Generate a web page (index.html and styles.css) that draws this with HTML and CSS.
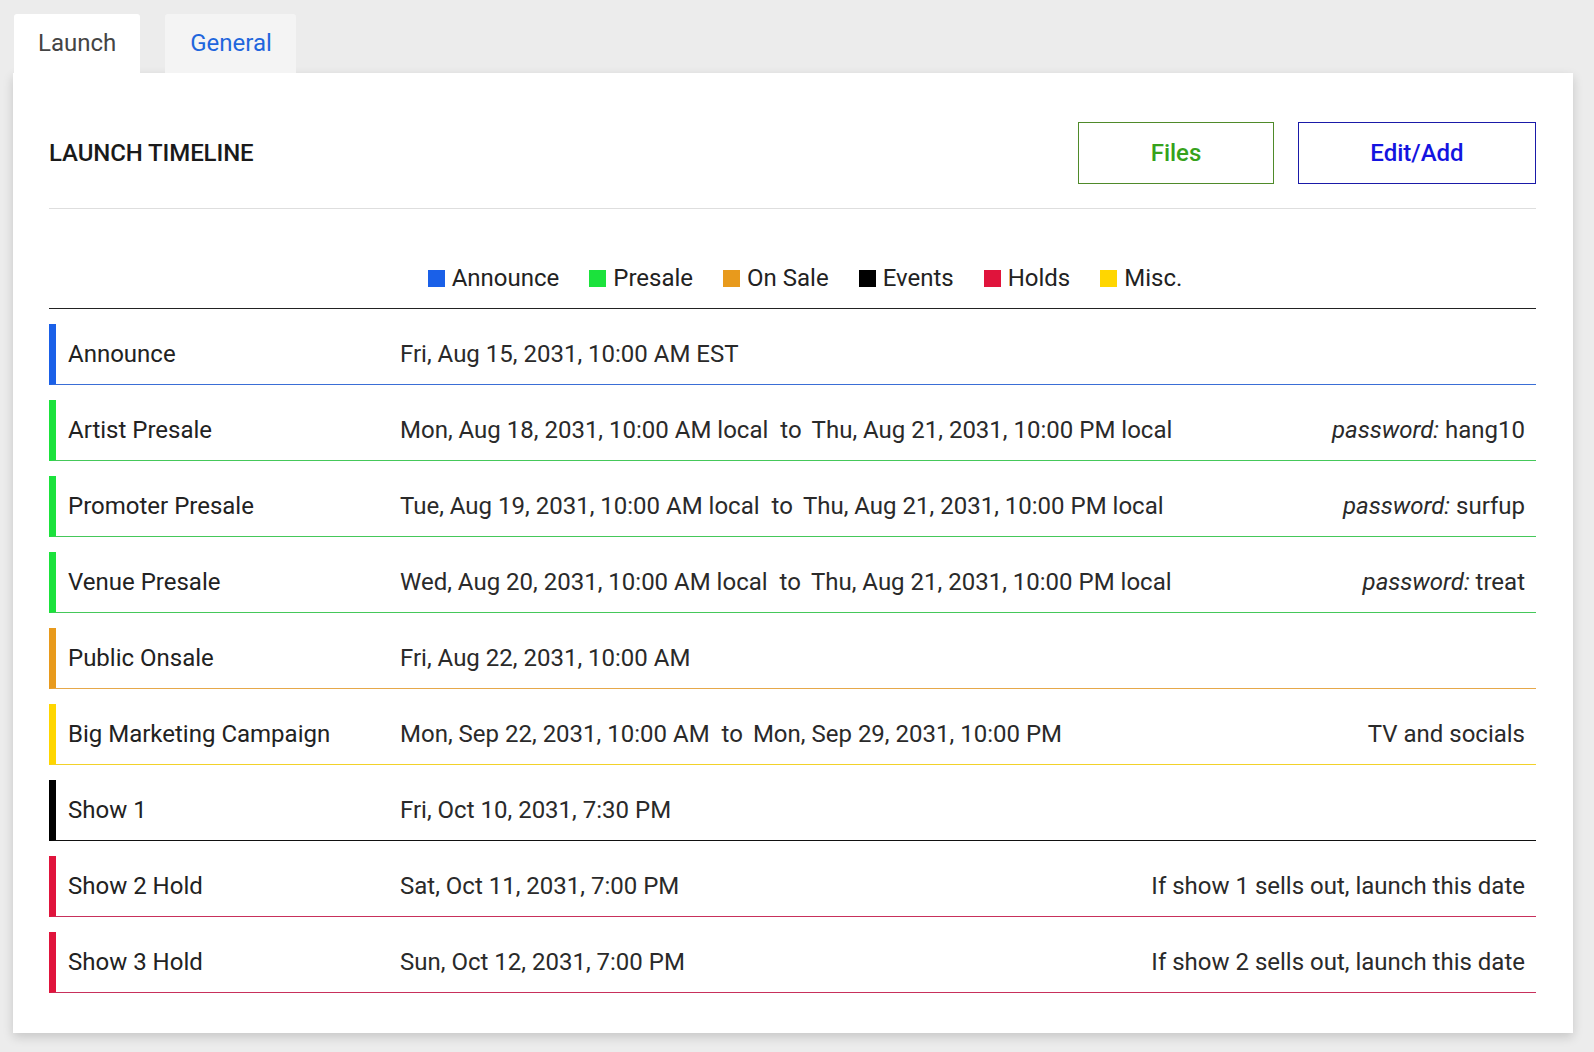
FILE: index.html
```html
<!DOCTYPE html>
<html lang="en">
<head>
<meta charset="utf-8">
<title>Launch Timeline</title>
<link rel="stylesheet" href="styles.css">
</head>
<body>
<div class="page">
  <div class="tabs">
    <div class="tab active">Launch</div>
    <div class="tab">General</div>
  </div>
  <div class="card">
    <div class="card-header">
      <h1 class="title">LAUNCH TIMELINE</h1>
      <div class="actions">
        <button class="btn btn-files">Files</button>
        <button class="btn btn-edit">Edit/Add</button>
      </div>
    </div>
    <div class="legend">
      <span class="legend-item"><i class="sw announce"></i>Announce</span>
      <span class="legend-item"><i class="sw presale"></i>Presale</span>
      <span class="legend-item"><i class="sw onsale"></i>On Sale</span>
      <span class="legend-item"><i class="sw events"></i>Events</span>
      <span class="legend-item"><i class="sw holds"></i>Holds</span>
      <span class="legend-item"><i class="sw misc"></i>Misc.</span>
    </div>
    <div class="rows">
      <div class="row announce">
        <span class="label">Announce</span>
        <span class="date">Fri, Aug 15, 2031, 10:00 AM EST</span>
        <span class="note"></span>
      </div>
      <div class="row presale">
        <span class="label">Artist Presale</span>
        <span class="date">Mon, Aug 18, 2031, 10:00 AM local<span class="to">to</span>Thu, Aug 21, 2031, 10:00 PM local</span>
        <span class="note"><em>password:</em> hang10</span>
      </div>
      <div class="row presale">
        <span class="label">Promoter Presale</span>
        <span class="date">Tue, Aug 19, 2031, 10:00 AM local<span class="to">to</span>Thu, Aug 21, 2031, 10:00 PM local</span>
        <span class="note"><em>password:</em> surfup</span>
      </div>
      <div class="row presale">
        <span class="label">Venue Presale</span>
        <span class="date">Wed, Aug 20, 2031, 10:00 AM local<span class="to">to</span>Thu, Aug 21, 2031, 10:00 PM local</span>
        <span class="note"><em>password:</em> treat</span>
      </div>
      <div class="row onsale">
        <span class="label">Public Onsale</span>
        <span class="date">Fri, Aug 22, 2031, 10:00 AM</span>
        <span class="note"></span>
      </div>
      <div class="row misc">
        <span class="label">Big Marketing Campaign</span>
        <span class="date">Mon, Sep 22, 2031, 10:00 AM<span class="to">to</span>Mon, Sep 29, 2031, 10:00 PM</span>
        <span class="note">TV and socials</span>
      </div>
      <div class="row events">
        <span class="label">Show 1</span>
        <span class="date">Fri, Oct 10, 2031, 7:30 PM</span>
        <span class="note"></span>
      </div>
      <div class="row holds">
        <span class="label">Show 2 Hold</span>
        <span class="date">Sat, Oct 11, 2031, 7:00 PM</span>
        <span class="note">If show 1 sells out, launch this date</span>
      </div>
      <div class="row holds">
        <span class="label">Show 3 Hold</span>
        <span class="date">Sun, Oct 12, 2031, 7:00 PM</span>
        <span class="note">If show 2 sells out, launch this date</span>
      </div>
    </div>
  </div>
</div>
</body>
</html>
```

FILE: styles.css
```css
* { box-sizing: border-box; }

html, body {
  margin: 0;
  padding: 0;
  background: #ececec;
  font-family: Roboto, "Liberation Sans", Arial, sans-serif;
  color: #222;
}

.page {
  padding: 14px 21px 20px 13px;
}

.tabs {
  display: flex;
  gap: 25px;
  padding-left: 1px;
}

.tab {
  height: 59px;
  padding: 0 24px 2px 25px;
  display: flex;
  align-items: center;
  font-size: 24px;
  color: #1f66dd;
  background: #f4f4f4;
  border-radius: 3px 3px 0 0;
}

.tab.active {
  color: #444;
  background: #fff;
  padding-left: 24px;
}

.card {
  width: 1560px;
  background: #fff;
  padding: 0 37px 40px 36px;
  box-shadow: 0 4px 10px rgba(0, 0, 0, 0.16);
}

.card-header {
  display: flex;
  align-items: center;
  justify-content: space-between;
  padding: 49px 0 24px;
  border-bottom: 1px solid #dedede;
}

.title {
  margin: 0;
  font-size: 24px;
  font-weight: 500;
  color: #1a1a1a;
  letter-spacing: -0.1px;
}

.actions {
  display: flex;
  gap: 24px;
}

.btn {
  height: 62px;
  background: #fff;
  font-family: inherit;
  font-size: 24px;
  font-weight: 500;
  cursor: pointer;
}

.btn-files {
  width: 196px;
  border: 1px solid #4f8a2a;
  color: #36a21c;
}

.btn-edit {
  width: 238px;
  border: 1px solid #1a1aa8;
  color: #1414e0;
}

.legend {
  display: flex;
  justify-content: center;
  align-items: center;
  gap: 30px;
  padding: 57px 0 18px 25px;
  border-bottom: 1px solid #222;
  font-size: 24px;
  line-height: 24px;
  color: #222;
}

.legend-item {
  display: flex;
  align-items: center;
  gap: 7px;
}

.sw {
  display: block;
  width: 17px;
  height: 17px;
}

.sw.announce { background: #1a60e8; }
.sw.presale { background: #1be23c; }
.sw.onsale { background: #e89a1c; }
.sw.events { background: #000; }
.sw.holds { background: #e0143c; }
.sw.misc { background: #ffd600; }

.row {
  display: grid;
  grid-template-columns: 332px auto 1fr;
  align-items: center;
  height: 61px;
  margin-top: 15px;
  padding: 0 11px 0 12px;
  border-left: 7px solid;
  border-bottom: 1px solid;
  font-size: 24px;
  color: #222;
}

.row.announce { border-left-color: #1a60e8; border-bottom-color: #3a6ed6; }
.row.presale { border-left-color: #1be23c; border-bottom-color: #45c85a; }
.row.onsale { border-left-color: #e89a1c; border-bottom-color: #e6a84a; }
.row.misc { border-left-color: #ffd600; border-bottom-color: #f2d22a; }
.row.events { border-left-color: #000; border-bottom-color: #111; }
.row.holds { border-left-color: #e0143c; border-bottom-color: #c8305c; }

.label { color: #222; }

.date { color: #2a2a2a; white-space: nowrap; }

.to { margin: 0 10px 0 12px; }

.note {
  text-align: right;
  color: #2a2a2a;
  white-space: nowrap;
}

.note em { font-style: italic; }
```
